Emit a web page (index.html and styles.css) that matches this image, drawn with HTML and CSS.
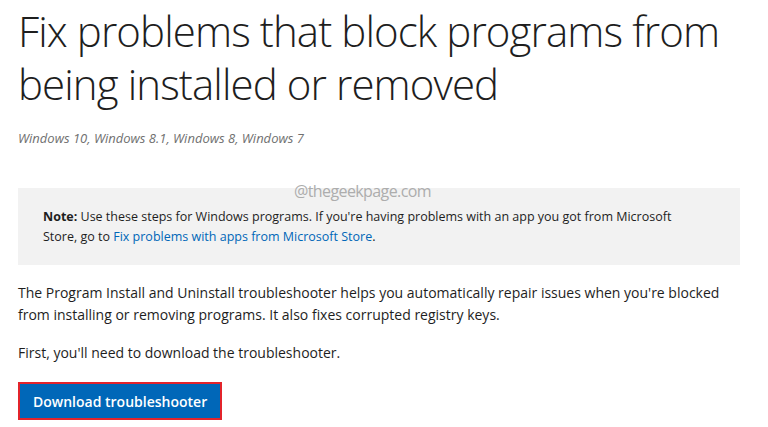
FILE: index.html
```html
<!DOCTYPE html>
<html lang="en">
<head>
<meta charset="utf-8">
<title>Fix problems that block programs from being installed or removed</title>
<link rel="stylesheet" href="styles.css">
</head>
<body>
<main class="page">
  <h1 class="title">Fix problems that block programs from being installed or removed</h1>
  <p class="applies">Windows 10, Windows 8.1, Windows 8, Windows 7</p>
  <div class="note-wrap">
    <span class="watermark">@thegeekpage.com</span>
    <div class="note">
      <p><strong>Note:</strong> Use these steps for Windows programs. If you're having problems with an app you got from Microsoft Store, go to <a href="#" class="link">Fix problems with apps from Microsoft Store</a>.</p>
    </div>
  </div>
  <p class="para first">The Program Install and Uninstall troubleshooter helps you automatically repair issues when you're blocked from installing or removing programs. It also fixes corrupted registry keys.</p>
  <p class="para">First, you'll need to download the troubleshooter.</p>
  <a href="#" class="btn">Download troubleshooter</a>
</main>
</body>
</html>
```

FILE: styles.css
```css
html, body {
  margin: 0;
  padding: 0;
  background: #ffffff;
}
body {
  font-family: "Open Sans", "Noto Sans", sans-serif;
  color: #1e1e1e;
}
.page {
  padding: 0 0 0 18px;
  width: 722px;
}
.title {
  margin: 4px 0 0 0;
  width: 730px;
  font-size: 42px;
  line-height: 53px;
  font-weight: 300;
  color: #1e1e1e;
  letter-spacing: -0.9px;
}
.applies {
  margin: 18px 0 0 0;
  font-size: 13px;
  line-height: 20px;
  font-style: italic;
  color: #707070;
}
.note-wrap {
  position: relative;
  margin-top: 40px;
}
.watermark {
  position: absolute;
  z-index: 1;
  left: 276px;
  top: -7px;
  font-size: 16px;
  line-height: 20px;
  letter-spacing: -0.6px;
  color: #adadad;
}
.note {
  background: #f2f2f2;
  padding: 19px 52px 18px 25px;
}
.note p {
  margin: 0;
  font-size: 12.5px;
  line-height: 20px;
  color: #1e1e1e;
}
.note strong {
  font-weight: 700;
}
.link {
  color: #0067b8;
  text-decoration: none;
}
.para {
  margin: 17px 0 0 0;
  font-size: 14px;
  line-height: 22px;
  color: #1e1e1e;
}
.para + .para {
  margin-top: 16px;
}
.btn {
  display: inline-flex;
  align-items: center;
  margin-top: 18px;
  height: 34px;
  padding: 0 13px;
  background: #0067b8;
  border: 2px solid #e3242b;
  color: #ffffff;
  font-size: 14px;
  font-weight: 600;
  text-decoration: none;
}
```
